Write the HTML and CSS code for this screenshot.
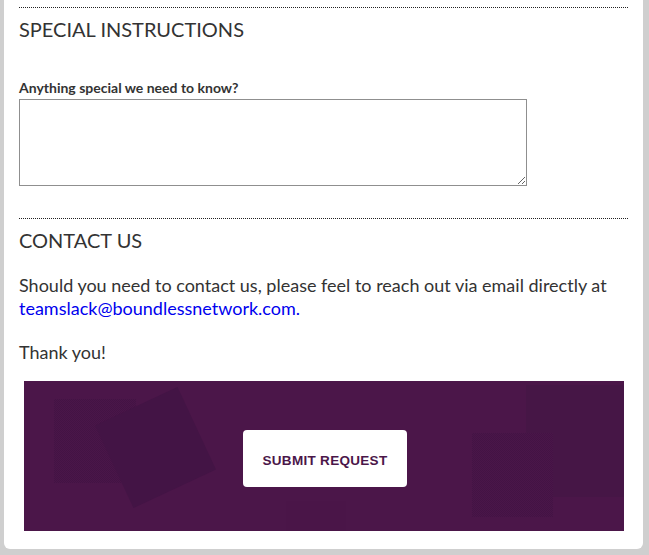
FILE: index.html
```html
<!DOCTYPE html>
<html lang="en">
<head>
<meta charset="utf-8">
<title>Special Instructions</title>
<link rel="stylesheet" href="styles.css">
</head>
<body>
<main class="card">
  <section class="section">
    <h2 class="section-title">SPECIAL INSTRUCTIONS</h2>
    <label class="field-label" for="notes">Anything special we need to know?</label>
    <textarea id="notes" class="field-input"></textarea>
  </section>
  <section class="section">
    <h2 class="section-title">CONTACT US</h2>
    <p class="copy">Should you need to contact us, please feel to reach out via email directly at <a class="mail" href="#">teamslack@boundlessnetwork.com.</a></p>
    <p class="copy">Thank you!</p>
  </section>
  <div class="banner">
    <span class="deco deco-checker deco-a"></span>
    <span class="deco deco-tilt"></span>
    <span class="deco deco-block"></span>
    <span class="deco deco-checker deco-b"></span>
    <span class="deco deco-faint"></span>
    <button class="submit" type="button">SUBMIT REQUEST</button>
  </div>
</main>
</body>
</html>
```
FILE: styles.css
```css
html, body {
  margin: 0;
  padding: 0;
}
body {
  background: #cfcfcf;
  font-family: Lato, "Open Sans", sans-serif;
  color: #333;
  height: 555px;
  overflow: hidden;
}
.card {
  margin-left: 4px;
  width: 609px;
  padding: 7px 15px 18px;
  background: #fff;
  border-radius: 0 0 6px 6px;
}
.section {
  border-top: 1px dotted #222;
}
.section + .section {
  margin-top: 32px;
}
.section-title {
  margin: 9px 0 0;
  font-size: 20px;
  font-weight: 400;
  line-height: 24px;
  color: #333;
}
.field-label {
  display: block;
  margin-top: 38px;
  font-size: 14px;
  font-weight: 700;
  line-height: 17px;
  color: #333;
}
.field-input {
  display: block;
  box-sizing: border-box;
  margin: 3px 0 0;
  width: 508px;
  height: 87px;
  border: 1px solid #8f8f8f;
  padding: 4px;
  font-family: Lato, sans-serif;
  resize: both;
}
.copy {
  margin: 22px 0 0;
  font-size: 18px;
  line-height: 23px;
  color: #333;
}
.copy + .copy {
  margin-top: 21px;
}
.mail {
  color: #0000ee;
  text-decoration: none;
}
.banner {
  position: relative;
  overflow: hidden;
  margin: 17px 0 0 5px;
  width: 600px;
  height: 150px;
  background: #4b1649;
  display: flex;
  align-items: center;
  justify-content: center;
}
.deco {
  position: absolute;
  display: block;
}
.deco-checker {
  background-color: #471547;
  background-image: repeating-conic-gradient(#431344 0 25%, #4a1649 0 50%);
  background-size: 2px 2px;
}
.deco-a {
  left: 30px;
  top: 18px;
  width: 82px;
  height: 84px;
}
.deco-tilt {
  left: 86px;
  top: 21px;
  width: 91px;
  height: 91px;
  background: #431445;
  transform: rotate(-25deg);
}
.deco-block {
  left: 502px;
  top: 4px;
  width: 98px;
  height: 112px;
  background: #461646;
}
.deco-b {
  left: 448px;
  top: 52px;
  width: 81px;
  height: 84px;
}
.deco-faint {
  left: 262px;
  top: 120px;
  width: 60px;
  height: 40px;
  background: #4a1548;
}
.submit {
  position: relative;
  margin: 5px 0 0 2px;
  padding: 3px 0 0;
  width: 164px;
  height: 57px;
  border: 0;
  border-radius: 4px;
  background: #fff;
  color: #4b1649;
  font-family: "Liberation Sans", Arial, sans-serif;
  font-weight: 700;
  font-size: 13.5px;
  letter-spacing: 0.3px;
}
```
